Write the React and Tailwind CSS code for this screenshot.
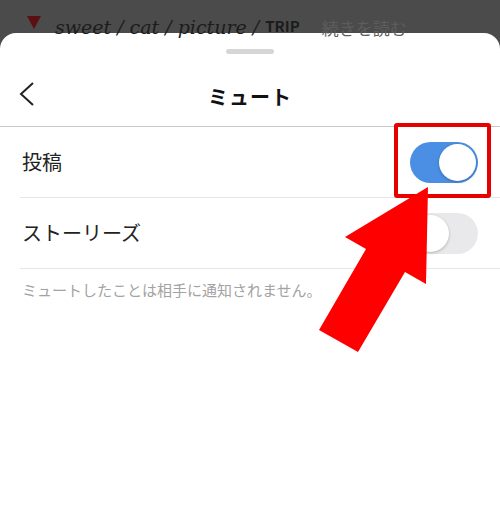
const JP = { fontFamily: '"Noto Sans CJK JP", "Noto Sans", sans-serif' }

function Toggle({ on }) {
  return (
    <div
      className={`w-[68px] h-[41px] rounded-full p-[2px] flex ${
        on ? 'bg-[#4a8fe3] justify-end' : 'bg-[#e9e9eb] justify-start'
      }`}
    >
      <div className="w-[37px] h-[37px] rounded-full bg-white shadow-[0_1px_3px_rgba(0,0,0,0.25)]" />
    </div>
  )
}

function Row({ label, on }) {
  return (
    <div className="pl-[20px]">
      <div className="h-[71px] flex items-center justify-between pr-[22px] border-b border-[#e6e6e6]">
        <span className="pl-[2px] text-[20px] text-[#222]">{label}</span>
        <Toggle on={on} />
      </div>
    </div>
  )
}

export default function App() {
  return (
    <div className="relative w-[500px] h-[507px] bg-[#4b4b4b] overflow-hidden" style={JP}>
      {/* dimmed post caption behind the sheet */}
      <div className="h-[33px] flex items-end pl-[27px] text-[#1c1c1c]">
        <span className="w-0 h-0 border-l-[7px] border-r-[7px] border-t-[13px] border-l-transparent border-r-transparent border-t-[#5a1010] mb-[4px]" />
        <span
          className="ml-[14px] text-[19px] leading-none italic translate-y-[4px]"
          style={{ fontFamily: '"DejaVu Serif", serif' }}
        >
          sweet / cat / picture /
        </span>
        <span className="ml-[6px] text-[15px] leading-none font-bold">TRIP</span>
        <span className="ml-[22px] text-[17px] leading-none text-[#5d5d5d] translate-y-[3px]">続きを読む</span>
      </div>

      {/* bottom sheet */}
      <div className="bg-white rounded-t-[16px] h-[474px]">
        <div className="flex justify-center pt-[16px]">
          <div className="w-[48px] h-[5px] rounded-full bg-[#d6d6d6]" />
        </div>

        <div className="relative h-[73px] flex items-center justify-center border-b border-[#c8c8c8]">
          <svg className="absolute left-[18px] top-[27px]" width="18" height="26" viewBox="0 0 18 26">
            <polyline points="15,2 3,13 15,24" fill="none" stroke="#222" strokeWidth="2" strokeLinejoin="miter" />
          </svg>
          <span className="text-[20px] font-bold text-[#111] tracking-[1px] mt-[14px]">ミュート</span>
        </div>

        <Row label="投稿" on />
        <Row label="ストーリーズ" on={false} />

        <p className="pl-[22px] pt-[10px] text-[15px] text-[#a3a3a3]">
          ミュートしたことは相手に通知されません。
        </p>
      </div>

      {/* highlight box around the post toggle */}
      <div className="absolute left-[394px] top-[123px] w-[97px] h-[75px] border-[4px] border-[#e60000] rounded-[3px]" />

      {/* pointer arrow */}
      <svg className="absolute left-0 top-0" width="500" height="507" viewBox="0 0 500 507">
        <polygon
          points="428,187 345,237 366,249 319,330 358,352 405,272 426,284"
          fill="#ff0000"
        />
      </svg>
    </div>
  )
}
